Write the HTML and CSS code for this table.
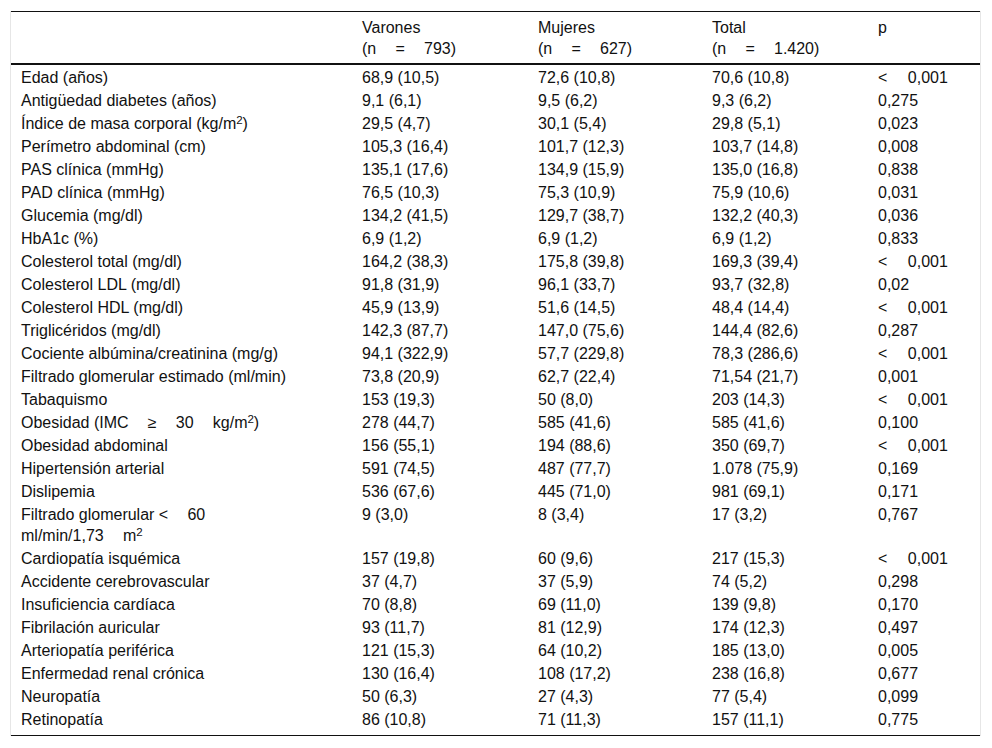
FILE: index.html
```html
<!DOCTYPE html>
<html lang="es">
<head>
<meta charset="utf-8">
<title>Tabla</title>
<link rel="stylesheet" href="styles.css">
</head>
<body>
<div class="wrap">
<table class="data">
<colgroup>
<col class="c1"><col class="c2"><col class="c3"><col class="c4"><col class="c5">
</colgroup>
<thead>
<tr>
<th></th>
<th>Varones<br>(n&thinsp;&emsp;=&thinsp;&emsp;793)</th>
<th>Mujeres<br>(n&thinsp;&emsp;=&thinsp;&emsp;627)</th>
<th>Total<br>(n&thinsp;&emsp;=&thinsp;&emsp;1.420)</th>
<th>p</th>
</tr>
</thead>
<tbody>
<tr><td>Edad (años)</td><td>68,9 (10,5)</td><td>72,6 (10,8)</td><td>70,6 (10,8)</td><td>&lt;&nbsp;&emsp;0,001</td></tr>
<tr><td>Antigüedad diabetes (años)</td><td>9,1 (6,1)</td><td>9,5 (6,2)</td><td>9,3 (6,2)</td><td>0,275</td></tr>
<tr><td>Índice de masa corporal (kg/m<sup>2</sup>)</td><td>29,5 (4,7)</td><td>30,1 (5,4)</td><td>29,8 (5,1)</td><td>0,023</td></tr>
<tr><td>Perímetro abdominal (cm)</td><td>105,3 (16,4)</td><td>101,7 (12,3)</td><td>103,7 (14,8)</td><td>0,008</td></tr>
<tr><td>PAS clínica (mmHg)</td><td>135,1 (17,6)</td><td>134,9 (15,9)</td><td>135,0 (16,8)</td><td>0,838</td></tr>
<tr><td>PAD clínica (mmHg)</td><td>76,5 (10,3)</td><td>75,3 (10,9)</td><td>75,9 (10,6)</td><td>0,031</td></tr>
<tr><td>Glucemia (mg/dl)</td><td>134,2 (41,5)</td><td>129,7 (38,7)</td><td>132,2 (40,3)</td><td>0,036</td></tr>
<tr><td>HbA1c (%)</td><td>6,9 (1,2)</td><td>6,9 (1,2)</td><td>6,9 (1,2)</td><td>0,833</td></tr>
<tr><td>Colesterol total (mg/dl)</td><td>164,2 (38,3)</td><td>175,8 (39,8)</td><td>169,3 (39,4)</td><td>&lt;&nbsp;&emsp;0,001</td></tr>
<tr><td>Colesterol LDL (mg/dl)</td><td>91,8 (31,9)</td><td>96,1 (33,7)</td><td>93,7 (32,8)</td><td>0,02</td></tr>
<tr><td>Colesterol HDL (mg/dl)</td><td>45,9 (13,9)</td><td>51,6 (14,5)</td><td>48,4 (14,4)</td><td>&lt;&nbsp;&emsp;0,001</td></tr>
<tr><td>Triglicéridos (mg/dl)</td><td>142,3 (87,7)</td><td>147,0 (75,6)</td><td>144,4 (82,6)</td><td>0,287</td></tr>
<tr><td>Cociente albúmina/creatinina (mg/g)</td><td>94,1 (322,9)</td><td>57,7 (229,8)</td><td>78,3 (286,6)</td><td>&lt;&nbsp;&emsp;0,001</td></tr>
<tr><td>Filtrado glomerular estimado (ml/min)</td><td>73,8 (20,9)</td><td>62,7 (22,4)</td><td>71,54 (21,7)</td><td>0,001</td></tr>
<tr><td>Tabaquismo</td><td>153 (19,3)</td><td>50 (8,0)</td><td>203 (14,3)</td><td>&lt;&nbsp;&emsp;0,001</td></tr>
<tr><td>Obesidad (IMC&thinsp;&emsp;≥&thinsp;&emsp;30&thinsp;&emsp;kg/m<sup>2</sup>)</td><td>278 (44,7)</td><td>585 (41,6)</td><td>585 (41,6)</td><td>0,100</td></tr>
<tr><td>Obesidad abdominal</td><td>156 (55,1)</td><td>194 (88,6)</td><td>350 (69,7)</td><td>&lt;&nbsp;&emsp;0,001</td></tr>
<tr><td>Hipertensión arterial</td><td>591 (74,5)</td><td>487 (77,7)</td><td>1.078 (75,9)</td><td>0,169</td></tr>
<tr><td>Dislipemia</td><td>536 (67,6)</td><td>445 (71,0)</td><td>981 (69,1)</td><td>0,171</td></tr>
<tr><td>Filtrado glomerular &lt;&thinsp;&emsp;60<br>ml/min/1,73&thinsp;&emsp;m<sup>2</sup></td><td>9 (3,0)</td><td>8 (3,4)</td><td>17 (3,2)</td><td>0,767</td></tr>
<tr><td>Cardiopatía isquémica</td><td>157 (19,8)</td><td>60 (9,6)</td><td>217 (15,3)</td><td>&lt;&nbsp;&emsp;0,001</td></tr>
<tr><td>Accidente cerebrovascular</td><td>37 (4,7)</td><td>37 (5,9)</td><td>74 (5,2)</td><td>0,298</td></tr>
<tr><td>Insuficiencia cardíaca</td><td>70 (8,8)</td><td>69 (11,0)</td><td>139 (9,8)</td><td>0,170</td></tr>
<tr><td>Fibrilación auricular</td><td>93 (11,7)</td><td>81 (12,9)</td><td>174 (12,3)</td><td>0,497</td></tr>
<tr><td>Arteriopatía periférica</td><td>121 (15,3)</td><td>64 (10,2)</td><td>185 (13,0)</td><td>0,005</td></tr>
<tr><td>Enfermedad renal crónica</td><td>130 (16,4)</td><td>108 (17,2)</td><td>238 (16,8)</td><td>0,677</td></tr>
<tr><td>Neuropatía</td><td>50 (6,3)</td><td>27 (4,3)</td><td>77 (5,4)</td><td>0,099</td></tr>
<tr class="last"><td>Retinopatía</td><td>86 (10,8)</td><td>71 (11,3)</td><td>157 (11,1)</td><td>0,775</td></tr>
</tbody>
</table>
</div>
</body>
</html>
```
FILE: styles.css
```css
html, body {
  margin: 0;
  padding: 0;
  background: #ffffff;
}

body {
  font-family: "Liberation Sans", Arial, sans-serif;
  font-size: 16px;
  color: #111111;
}

.wrap {
  margin: 11px 0 0 10px;
  width: 969px;
  border-left: 1px solid #e6e6e6;
  border-right: 1px solid #e6e6e6;
}

.data {
  width: 969px;
  border-collapse: collapse;
  table-layout: fixed;
  border-top: 1px solid #111111;
  border-bottom: 1px solid #111111;
}

.c1 { width: 341px; }
.c2 { width: 176px; }
.c3 { width: 174px; }
.c4 { width: 166px; }
.c5 { width: 112px; }

.data th {
  font-weight: normal;
  text-align: left;
  vertical-align: top;
  line-height: 21px;
  padding: 5px 10px 4px 10px;
  border-bottom: 2px solid #111111;
}

.data td {
  text-align: left;
  vertical-align: top;
  line-height: 21px;
  padding: 2px 10px 0 10px;
}

.data tr.last td {
  padding-bottom: 5px;
}

.data sup {
  font-size: 0.72em;
  line-height: 0;
  vertical-align: 0.45em;
}
```
